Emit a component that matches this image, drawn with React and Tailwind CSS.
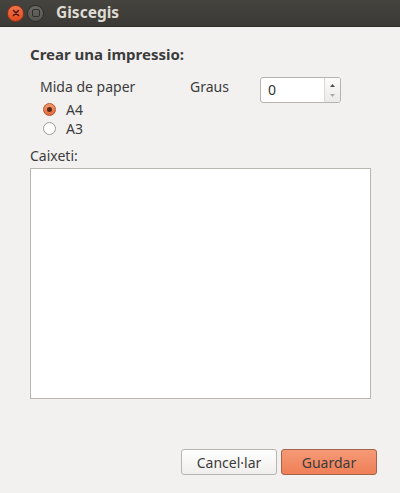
export default function App() {
  return (
    <div
      className="w-[400px] h-[493px] flex flex-col bg-[#f2f1f0] text-[#3c3c3c] overflow-hidden"
      style={{ fontFamily: '"Noto Sans", "Open Sans", sans-serif' }}
    >
      {/* Title bar */}
      <div className="h-[27px] flex-shrink-0 flex items-center pl-[7px] bg-gradient-to-b from-[#45443f] to-[#3a3935] border-b border-[#2f2e2b]">
        <div className="w-[17px] h-[17px] rounded-full bg-gradient-to-b from-[#f4744b] to-[#df4a1e] border border-[#8a3418] flex items-center justify-center">
          <svg width="8" height="8" viewBox="0 0 8 8" fill="none" stroke="#4a1a0c" strokeWidth="1.6" strokeLinecap="round">
            <path d="M1.5 1.5l5 5M6.5 1.5l-5 5" />
          </svg>
        </div>
        <div className="ml-[3px] w-[17px] h-[17px] rounded-full bg-gradient-to-b from-[#6a6964] to-[#55544f] border border-[#2d2c29] flex items-center justify-center">
          <div className="w-[8px] h-[8px] rounded-[2px] border-[1.5px] border-[#2f2e2b]" />
        </div>
        <span className="ml-[12px] text-[15.5px] font-bold text-[#dfdbd2]">Giscegis</span>
      </div>

      {/* Body */}
      <div className="flex-1 flex flex-col px-[30px] pt-[17px]">
        <h1 className="text-[15px] font-bold leading-[20px] text-[#3c3c3c]">Crear una impressio:</h1>

        <div className="flex mt-[13px] pl-[10px]">
          <div className="w-[150px] flex flex-col">
            <span className="text-[14px] leading-[20px]">Mida de paper</span>
            <label className="flex items-center h-[19px] mt-[3px]">
              <span className="w-[13px] h-[13px] ml-[3px] rounded-full bg-gradient-to-b from-[#f39a6f] to-[#e0683a] border border-[#b5532d] flex items-center justify-center">
                <span className="w-[5px] h-[5px] rounded-full bg-[#5a2a18]" />
              </span>
              <span className="ml-[10px] text-[14px]">A4</span>
            </label>
            <label className="flex items-center h-[19px]">
              <span className="w-[13px] h-[13px] ml-[3px] rounded-full bg-white border border-[#9e9c98]" />
              <span className="ml-[10px] text-[14px]">A3</span>
            </label>
          </div>
          <span className="text-[14px] leading-[20px] w-[70px]">Graus</span>
          <div className="mt-[0px] h-[26px] w-[81px] flex rounded-[3px] border border-[#b6b3ae] bg-white overflow-hidden">
            <span className="flex-1 pl-[7px] text-[14px] leading-[24px] text-[#333]">0</span>
            <div className="w-[16px] flex flex-col items-center justify-center gap-[7px] border-l border-[#dcdad6] bg-gradient-to-b from-[#fbfbfa] to-[#eceae7]">
              <svg width="5" height="3" viewBox="0 0 5 3"><path d="M0 3L2.5 0L5 3z" fill="#4d4d4d" /></svg>
              <svg width="5" height="3" viewBox="0 0 5 3"><path d="M0 0L2.5 3L5 0z" fill="#aaa" /></svg>
            </div>
          </div>
        </div>

        <span className="mt-[9px] text-[14px] leading-[18px]">Caixeti:</span>
        <div className="mt-[3px] h-[231px] w-[341px] bg-white border border-[#bab7b2]" />

        <div className="flex-1" />
        <div className="flex justify-end gap-[4px] mr-[-7px] mb-[18px]">
          <button className="w-[96px] h-[26px] rounded-[3px] border border-[#b8b6b2] bg-gradient-to-b from-[#ffffff] to-[#efeeec] text-[14px] text-[#3c3c3c]">
            Cancel·lar
          </button>
          <button className="w-[96px] h-[26px] rounded-[3px] border border-[#a26548] bg-gradient-to-b from-[#f59a76] to-[#ef7f57] text-[14px] text-[#3c3c3c]">
            Guardar
          </button>
        </div>
      </div>
    </div>
  );
}
